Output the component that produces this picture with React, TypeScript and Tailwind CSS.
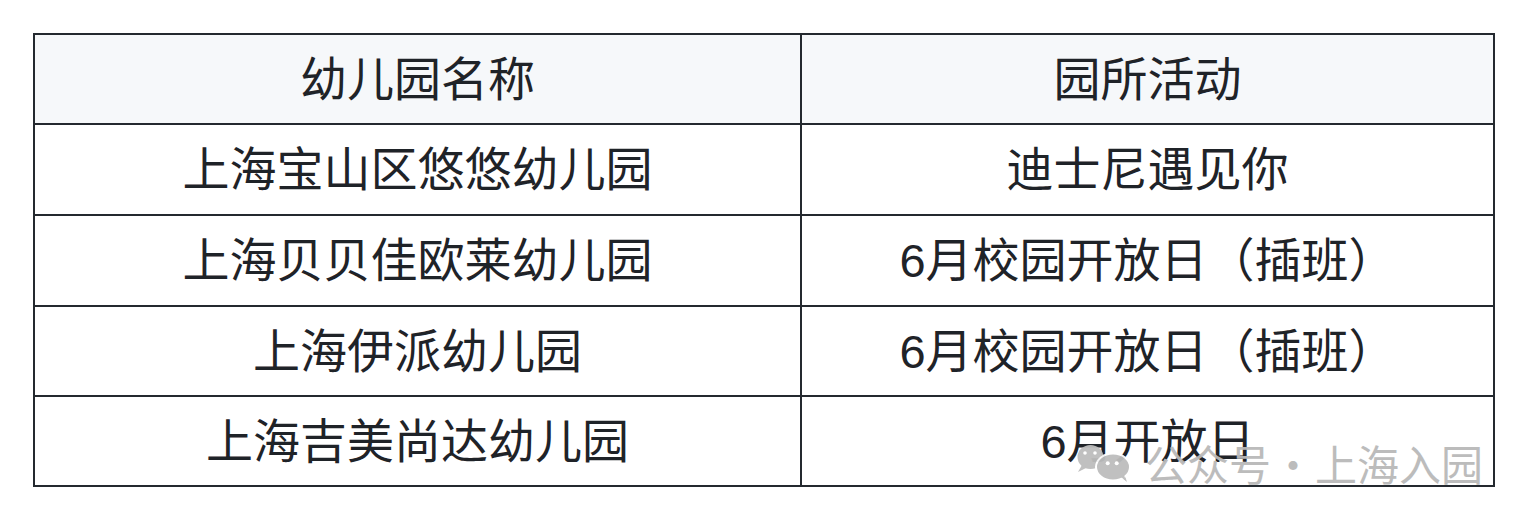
import React from "react";

const rows: [string, string][] = [
  ["上海宝山区悠悠幼儿园", "迪士尼遇见你"],
  ["上海贝贝佳欧莱幼儿园", "6月校园开放日（插班）"],
  ["上海伊派幼儿园", "6月校园开放日（插班）"],
  ["上海吉美尚达幼儿园", "6月开放日"],
];
const heights = ["h-[91px]", "h-[91px]", "h-[90px]", "h-[90px]"];

export default function App() {
  return (
    <div
      className="relative w-[1531px] h-[522px] bg-white text-[#1f2328]"
      style={{ fontFamily: '"Liberation Sans", "Noto Sans CJK SC", sans-serif' }}
    >
      <div className="pt-[33px] pl-[33px]">
        <table className="border-collapse w-[1462px] text-[47px] leading-none">
          <colgroup>
            <col className="w-[767px]" />
            <col />
          </colgroup>
          <thead>
            <tr className="h-[90px] bg-[#f6f8fa]">
              <th className="border-[2.5px] border-[#24292f] font-normal text-center align-middle">幼儿园名称</th>
              <th className="border-[2.5px] border-[#24292f] font-normal text-center align-middle">园所活动</th>
            </tr>
          </thead>
          <tbody>
            {rows.map((r, i) => (
              <tr key={i} className={heights[i]}>
                <td className="border-[2.5px] border-[#24292f] text-center align-middle">{r[0]}</td>
                <td className="border-[2.5px] border-[#24292f] text-center align-middle">{r[1]}</td>
              </tr>
            ))}
          </tbody>
        </table>
      </div>

      <div className="absolute left-[1070px] top-[435px] flex items-start text-[#b9b9b9] opacity-95 pointer-events-none">
        <svg width="62" height="50" viewBox="0 0 62 50">
          <ellipse cx="20.5" cy="22" rx="13" ry="12" fill="#bdbdbd" />
          <path d="M12 30 L8 37 L18 32 Z" fill="#bdbdbd" />
          <circle cx="15" cy="18" r="1.8" fill="#fff" />
          <circle cx="25" cy="18" r="1.8" fill="#fff" />
          <path d="M50 41 L57 47 L54 38 Z" fill="#bdbdbd" />
          <ellipse cx="43" cy="32" rx="17" ry="13.5" fill="#bdbdbd" stroke="#fff" strokeWidth="2" />
          <path d="M51 42 L56 46 L54 40 Z" fill="#bdbdbd" />
          <circle cx="37.7" cy="28.3" r="2" fill="#fff" />
          <circle cx="46.7" cy="28.3" r="2" fill="#fff" />
        </svg>
        <div
          className="flex items-center text-[42px] leading-none mt-[7px] ml-[13px]"
          style={{ fontFamily: '"Noto Sans CJK SC", sans-serif' }}
        >
          <span>公众号</span>
          <span className="w-[44px] text-center">·</span>
          <span>上海入园</span>
        </div>
      </div>
    </div>
  );
}
